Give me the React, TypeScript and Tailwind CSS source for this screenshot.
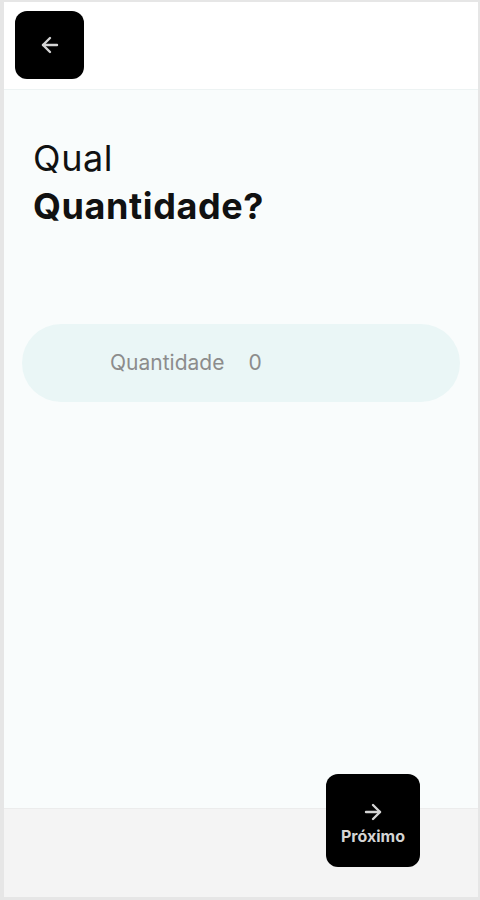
import { useState } from 'react'

function ArrowLeft() {
  return (
    <svg width="24" height="24" viewBox="0 0 24 24" fill="none" stroke="#d4d4d4" strokeWidth="2.4" strokeLinecap="round" strokeLinejoin="round">
      <path d="M19 12H5" />
      <path d="M12 19l-7-7 7-7" />
    </svg>
  )
}

function ArrowRight() {
  return (
    <svg width="24" height="24" viewBox="0 0 24 24" fill="none" stroke="#d4d4d4" strokeWidth="2.4" strokeLinecap="round" strokeLinejoin="round">
      <path d="M5 12h14" />
      <path d="M12 5l7 7-7 7" />
    </svg>
  )
}

export default function App() {
  const [quantidade, setQuantidade] = useState('0')

  return (
    <div
      className="w-[480px] h-[900px] bg-[#e6e6e6] pl-[4px] pr-[2px] pt-[2px] pb-[3px]"
      style={{ fontFamily: 'Inter, "Noto Sans", sans-serif' }}
    >
      <div className="h-full flex flex-col bg-[#f9fcfc]">
        <header className="h-[88px] bg-white border-b border-[#edf3f3] pl-[11px] pt-[9px] shrink-0">
          <button className="w-[69px] h-[68px] rounded-[12px] bg-black flex items-center justify-center">
            <ArrowLeft />
          </button>
        </header>

        <main className="flex-1 px-[18px]">
          <h1 className="pl-[11px] pt-[44px] text-[36px] leading-[48px] text-[#111] tracking-[0.6px]">
            Qual
            <br />
            <span className="font-bold">Quantidade?</span>
          </h1>

          <label className="mt-[94px] h-[78px] rounded-full bg-[#eaf6f6] flex items-center pl-[88px] gap-[24px] text-[21px] text-[#8c8c8c]">
            <span>Quantidade</span>
            <input
              value={quantidade}
              onChange={(e) => setQuantidade(e.target.value)}
              className="w-[120px] bg-transparent outline-none text-[#8c8c8c]"
            />
          </label>
        </main>

        <footer className="h-[89px] bg-[#f4f4f4] border-t border-[#ececec] shrink-0 flex justify-end pr-[58px]">
          <button className="-mt-[35px] w-[94px] h-[93px] rounded-[12px] bg-black flex flex-col items-center justify-center pt-[6px] text-[#d4d4d4] text-[16px] font-bold">
            <ArrowRight />
            <span>Próximo</span>
          </button>
        </footer>
      </div>
    </div>
  )
}
